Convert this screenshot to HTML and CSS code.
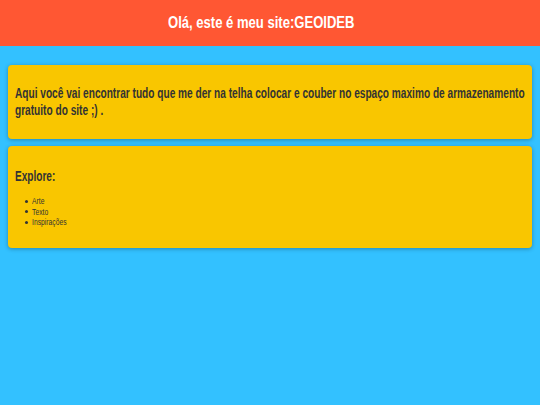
FILE: index.html
```html
<!DOCTYPE html>
<html lang="pt">
<head>
<meta charset="utf-8">
<title>GEOIDEB</title>
<link rel="stylesheet" href="styles.css">
</head>
<body>
<header class="topbar">
  <h1 class="title">Olá, este é meu site:GEOIDEB</h1>
</header>
<main class="content">
  <section class="card">
    <p class="intro">Aqui você vai encontrar tudo que me der na telha colocar e couber no espaço maximo de armazenamento gratuito do site ;) .</p>
  </section>
  <section class="card card-explore">
    <h2 class="card-title"><span class="narrow-title">Explore:</span></h2>
    <ul class="links">
      <li><span class="narrow-item">Arte</span></li>
      <li><span class="narrow-item">Texto</span></li>
      <li><span class="narrow-item">Inspirações</span></li>
    </ul>
  </section>
</main>
</body>
</html>
```
FILE: styles.css
```css
html, body {
  margin: 0;
  padding: 0;
}
body {
  background: #33c1ff;
  font-family: "Liberation Sans", Arial, sans-serif;
  color: #333;
  height: 405px;
  overflow: hidden;
}
.topbar {
  background: #ff5733;
  height: 46px;
  display: flex;
  align-items: center;
  justify-content: center;
  padding-right: 18px;
}
.title {
  margin: 0;
  font-size: 16px;
  font-weight: bold;
  color: #fff;
  display: inline-block;
  transform: scaleX(0.816);
}
.content {
  padding: 19px 8px;
  display: flex;
  flex-direction: column;
  gap: 7px;
}
.card {
  background: #f9c600;
  border-radius: 4px;
  box-shadow: 0 1px 4px rgba(0,0,0,0.3);
  padding: 20px 7px;
  overflow: hidden;
}
.card-explore {
  padding: 22px 7px 20px;
}
.intro {
  margin: 0;
  font-size: 14px;
  font-weight: bold;
  line-height: 17px;
  width: 145%;
  transform: scaleX(0.723);
  transform-origin: left top;
}
.card-title {
  margin: 0 0 12px;
  font-size: 14px;
  font-weight: bold;
}
.narrow-title {
  display: inline-block;
  transform: scaleX(0.72);
  transform-origin: left center;
}
.links {
  margin: 0;
  padding-left: 10px;
  list-style: none;
  font-size: 9px;
  line-height: 10.5px;
}
.links li {
  display: flex;
  align-items: center;
}
.links li::before {
  content: "";
  width: 3px;
  height: 3px;
  border-radius: 50%;
  background: #333;
  margin-right: 4px;
  flex: none;
}
.narrow-item {
  display: inline-block;
  transform: scaleX(0.75);
  transform-origin: left center;
}
```
